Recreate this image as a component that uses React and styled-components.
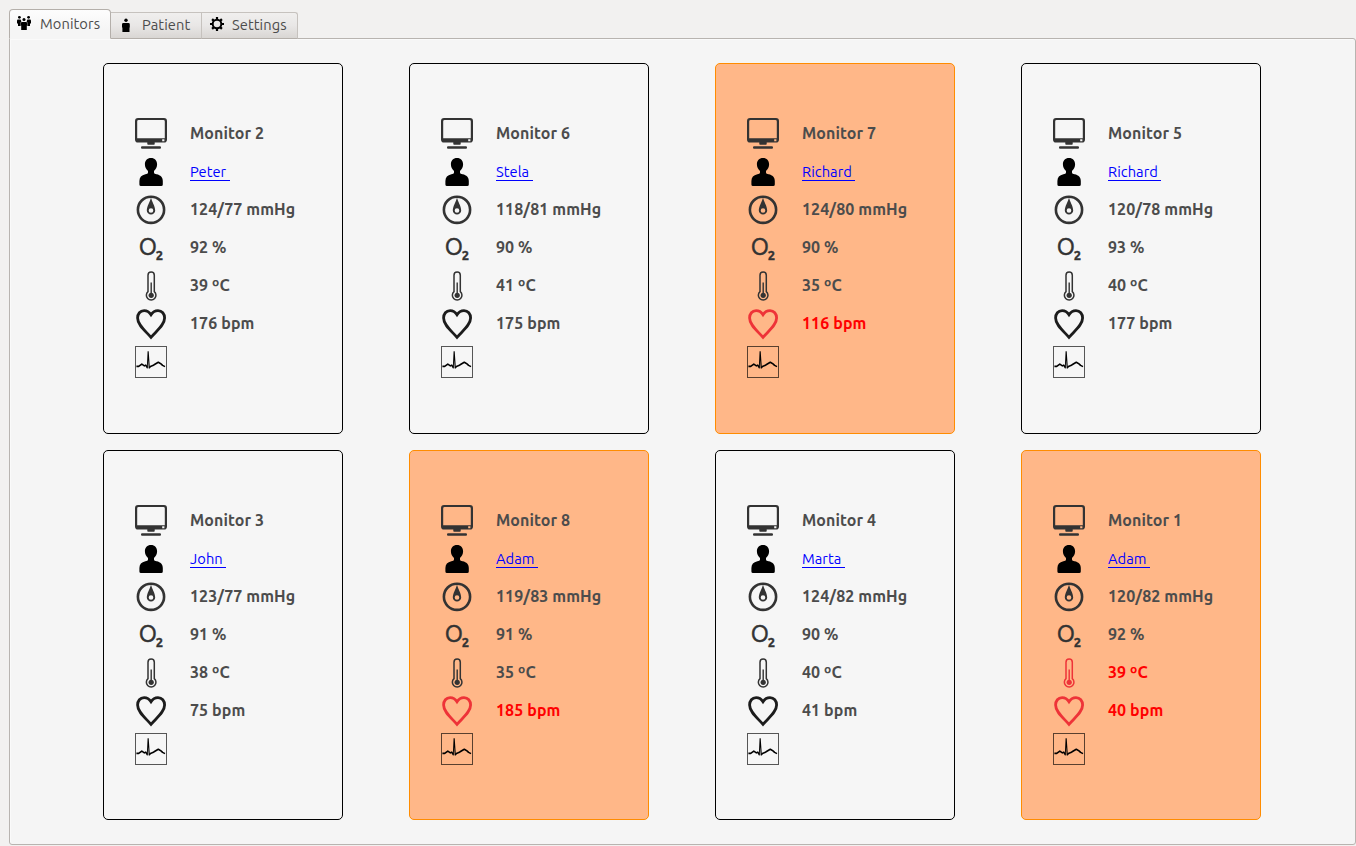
import React from "react";
import styled, { createGlobalStyle } from "styled-components";

const GlobalStyle = createGlobalStyle`
  *, *::before, *::after { box-sizing: border-box; }
  body {
    margin: 0;
    background: #f2f1f0;
    color: #4c4c4c;
    font-family: Ubuntu, "Noto Sans", sans-serif;
    overflow: hidden;
  }
  svg { display: block; flex: none; }
`;

const Window = styled.div`
  width: 1356px;
  height: 846px;
  padding: 9px 0 1px 9px;
  display: flex;
  flex-direction: column;
`;

const TabBar = styled.nav`
  display: flex;
  align-items: flex-end;
  height: 30px;
  margin-bottom: -1px;
  z-index: 1;
`;

const Tab = styled.button`
  display: flex;
  align-items: flex-start;
  gap: 8px;
  width: ${(p) => p.$width}px;
  height: ${(p) => (p.$active ? 30 : 27)}px;
  padding: ${(p) => (p.$active ? "4px 0 0 6px" : "2px 0 0 7px")};
  border: 1px solid ${(p) => (p.$active ? "#b4afaa" : "#c6c2be")};
  border-bottom-color: ${(p) => (p.$active ? "#f5f5f5" : "#b4afaa")};
  border-left-width: ${(p) => (p.$active ? 1 : 0)}px;
  border-radius: ${(p) => (p.$active ? "4px 4px 0 0" : p.$last ? "0 3px 0 0" : "0")};
  background: ${(p) =>
    p.$active
      ? "linear-gradient(#fdfdfd, #f5f5f5 70%)"
      : "linear-gradient(#f0efee, #e9e7e6 50%, #d9d6d3)"};
  color: #4c4c4c;
  font: 14.667px/20px Ubuntu, "Noto Sans", sans-serif;
  letter-spacing: 0.08px;
  white-space: nowrap;
`;

const Panel = styled.main`
  flex: 1;
  padding: 24px 0 0 93px;
  border: 1px solid #b8b4b0;
  border-radius: 0 3px 3px 3px;
  background: #f5f5f5;
  box-shadow: inset 1px 1px 0 #fafafa;
`;

const Grid = styled.div`
  display: grid;
  grid-template-columns: repeat(4, 240px);
  grid-template-rows: 371px 370px;
  column-gap: 66px;
  row-gap: 16px;
`;

const Card = styled.section`
  display: flex;
  flex-direction: column;
  gap: 6px;
  padding: 54px 31px 0;
  border: 1px solid ${(p) => (p.$alarm ? "#ff8c00" : "#000")};
  border-radius: 5px;
  background: ${(p) => (p.$alarm ? "#ffb788" : "#f6f6f6")};
`;

const Row = styled.div`
  display: flex;
  gap: 23px;
  height: 32px;
  color: ${(p) => (p.$alarm ? "#ee3338" : "#333")};
`;

const Value = styled.span`
  font-size: 16px;
  font-weight: 700;
  line-height: 30px;
  letter-spacing: 0.09px;
  white-space: nowrap;
  color: ${(p) => (p.$alarm ? "#ff0000" : "#4c4c4c")};
`;

const PatientLink = styled.a`
  height: 25px;
  padding-top: 8px;
  border-bottom: 1px solid #0000ff;
  color: #0000ff;
  font-size: 14.667px;
  line-height: 16px;
  letter-spacing: 0.05px;
  white-space: pre;
  text-decoration: none;
`;

const Icon = ({ children }) => (
  <svg width="32" height="32" viewBox="0 0 32 32" fill="none">
    {children}
  </svg>
);

const MonitorIcon = () => (
  <Icon>
    <path
      fill="currentColor"
      fillRule="evenodd"
      d="M3 0H29Q32 0 32 3V21.5Q32 24.6 29 24.6H3Q0 24.6 0 21.5V3Q0 0 3 0ZM3.6 2Q2.2 2 2.2 3.4V20.3H29.8V3.4Q29.8 2 28.4 2ZM27.2 21.2V23.2H29.4V21.2Z"
    />
    <path fill="currentColor" d="M12.3 24H19.7V26Q19.7 26.8 18.9 26.8H13.1Q12.3 26.8 12.3 26Z" />
    <rect x="6" y="28.3" width="20" height="2.5" rx="1.1" fill="currentColor" />
  </Icon>
);

const PersonIcon = () => (
  <Icon>
    <path
      fill="#000"
      d="M16 2C19.8 2 22.1 4.6 22.1 8.2C22.1 11 20.9 13.2 19 14.9V16.5C19 17.6 20.2 17.9 21.6 18.2C25.6 19 27.8 21.3 27.8 25V28.4Q27.8 30 26.2 30H6Q4.4 30 4.4 28.4V25C4.4 21.3 6.4 19 10.4 18.2C11.8 17.9 13 17.6 13 16.5V14.9C11.1 13.2 9.9 11 9.9 8.2C9.9 4.6 12.2 2 16 2Z"
    />
  </Icon>
);

const PressureIcon = () => (
  <Icon>
    <circle cx="16" cy="15.8" r="13.1" stroke="currentColor" strokeWidth="2.6" />
    <path
      fill="currentColor"
      fillRule="evenodd"
      d="M16 3.4C16.8 7.4 20.2 12.2 20.2 16.4A4.2 4.2 0 0 1 11.8 16.4C11.8 12.2 15.2 7.4 16 3.4ZM16 14.2A2.3 2.3 0 0 0 16 18.8A2.3 2.3 0 0 0 16 14.2Z"
    />
  </Icon>
);

const OxygenIcon = () => (
  <Icon>
    <g fill="currentColor" stroke="currentColor" fontFamily='Ubuntu, "Noto Sans", sans-serif'>
      <text x="3.8" y="22.7" fontSize="23.4" strokeWidth="0.5">O</text>
      <text x="20.7" y="28" fontSize="13" fontWeight="700" strokeWidth="0.4">2</text>
    </g>
  </Icon>
);

const ThermometerIcon = () => (
  <Icon>
    <path
      stroke="currentColor"
      strokeWidth="1.5"
      d="M13 21.6V5.2A3.1 3.1 0 0 1 19.3 5.2V21.6A4.8 4.8 0 1 1 13 21.6Z"
    />
    <path stroke="currentColor" strokeWidth="1.4" d="M16.2 12.6V24" />
    <circle cx="16.2" cy="25.3" r="2.6" fill="currentColor" />
  </Icon>
);

const HeartIcon = ({ alarm }) => (
  <Icon>
    <path
      stroke={alarm ? "#ee3338" : "#1c1c1c"}
      strokeWidth="2.8"
      d="M16 6.7C14.2 3.8 11.7 2.6 9.1 2.6C5.1 2.6 2.6 5.8 2.6 10C2.6 17 10.3 22.8 16 29.3C21.7 22.8 29.6 17 29.6 10C29.6 5.8 27 2.6 23 2.6C20.3 2.6 17.8 3.8 16 6.7Z"
    />
  </Icon>
);

const EcgIcon = () => (
  <Icon>
    <rect x="0.5" y="0.5" width="31" height="31" stroke="#000" strokeOpacity="0.65" />
    <path
      stroke="#000"
      strokeWidth="1.6"
      strokeLinejoin="round"
      d="M1.4 20.4H3.7L6.8 18.1L9.4 19.9L10.8 19.2L12.3 21.6M14.3 21.8L15.4 20.4L17.8 19.6L20.3 18L23.3 16.2L26 17.9L27.6 19.4L30 20.6"
    />
    <path fill="#000" d="M11.8 22.6L12.6 5.2H13.7L14.9 22.6H13.7L13.1 14L12.7 22.6Z" />
  </Icon>
);

const GroupTabIcon = () => (
  <svg width="16" height="16" viewBox="0 0 16 16" fill="#000">
    <circle cx="3.4" cy="2.3" r="1.4" />
    <circle cx="12.6" cy="2.3" r="1.4" />
    <circle cx="8" cy="4.4" r="1.5" />
    <path d="M2 4.6H4.6L5.4 6.4L4.6 7.4V11H2V8.6H1V6Q1 4.6 2 4.6ZM11.4 4.6H14Q15 4.6 15 6V8.6H14V11H11.4V7.4L10.6 6.4Z" />
    <path d="M6.2 7H9.8Q11.2 7 11.2 8.4V10.4H10.8V15H5.2V10.4H4.8V8.4Q4.8 7 6.2 7Z" />
  </svg>
);

const PatientTabIcon = () => (
  <svg width="16" height="16" viewBox="0 0 16 16" fill="#000">
    <circle cx="8" cy="4.3" r="1.7" />
    <path d="M5.4 7H10.4Q11.8 7 11.8 8.4V11.4H11.5V16H4.4V11.4H4V8.4Q4 7 5.4 7Z" />
  </svg>
);

const SettingsTabIcon = () => (
  <svg width="15" height="16" viewBox="0 0 15 16" fill="none" stroke="#000">
    <circle cx="8" cy="8" r="4.3" strokeWidth="2" />
    <path
      strokeWidth="2.2"
      d="M8 1V4M8 12V15M1 8H4M12 8H15M3.1 3.1L5.1 5.1M10.9 10.9L12.9 12.9M3.1 12.9L5.1 10.9M10.9 5.1L12.9 3.1"
    />
  </svg>
);

const TabIconSlot = styled.span`
  padding-top: 1px;
`;

const monitors = [
  { id: 2, patient: "Peter", pressure: "124/77", oxygen: 92, temp: 39, bpm: 176 },
  { id: 6, patient: "Stela", pressure: "118/81", oxygen: 90, temp: 41, bpm: 175 },
  { id: 7, patient: "Richard", pressure: "124/80", oxygen: 90, temp: 35, bpm: 116, bpmAlarm: true },
  { id: 5, patient: "Richard", pressure: "120/78", oxygen: 93, temp: 40, bpm: 177 },
  { id: 3, patient: "John", pressure: "123/77", oxygen: 91, temp: 38, bpm: 75 },
  { id: 8, patient: "Adam", pressure: "119/83", oxygen: 91, temp: 35, bpm: 185, bpmAlarm: true },
  { id: 4, patient: "Marta", pressure: "124/82", oxygen: 90, temp: 40, bpm: 41 },
  { id: 1, patient: "Adam", pressure: "120/82", oxygen: 92, temp: 39, bpm: 40, tempAlarm: true, bpmAlarm: true },
];

const MonitorCard = ({ data }) => (
  <Card $alarm={data.bpmAlarm || data.tempAlarm}>
    <Row><MonitorIcon /><Value>Monitor {data.id}</Value></Row>
    <Row><PersonIcon /><PatientLink href="#">{data.patient + " "}</PatientLink></Row>
    <Row><PressureIcon /><Value>{data.pressure} mmHg</Value></Row>
    <Row><OxygenIcon /><Value>{data.oxygen} %</Value></Row>
    <Row $alarm={data.tempAlarm}>
      <ThermometerIcon /><Value $alarm={data.tempAlarm}>{data.temp} ºC</Value>
    </Row>
    <Row>
      <HeartIcon alarm={data.bpmAlarm} /><Value $alarm={data.bpmAlarm}>{data.bpm} bpm</Value>
    </Row>
    <Row><EcgIcon /></Row>
  </Card>
);

export default function App() {
  return (
    <>
      <GlobalStyle />
      <Window>
        <TabBar>
          <Tab $active $width={102}>
            <TabIconSlot><GroupTabIcon /></TabIconSlot>Monitors
          </Tab>
          <Tab $width={91}>
            <TabIconSlot><PatientTabIcon /></TabIconSlot>Patient
          </Tab>
          <Tab $width={96} $last>
            <TabIconSlot><SettingsTabIcon /></TabIconSlot>Settings
          </Tab>
        </TabBar>
        <Panel>
          <Grid>
            {monitors.map((m) => <MonitorCard key={m.id} data={m} />)}
          </Grid>
        </Panel>
      </Window>
    </>
  );
}
